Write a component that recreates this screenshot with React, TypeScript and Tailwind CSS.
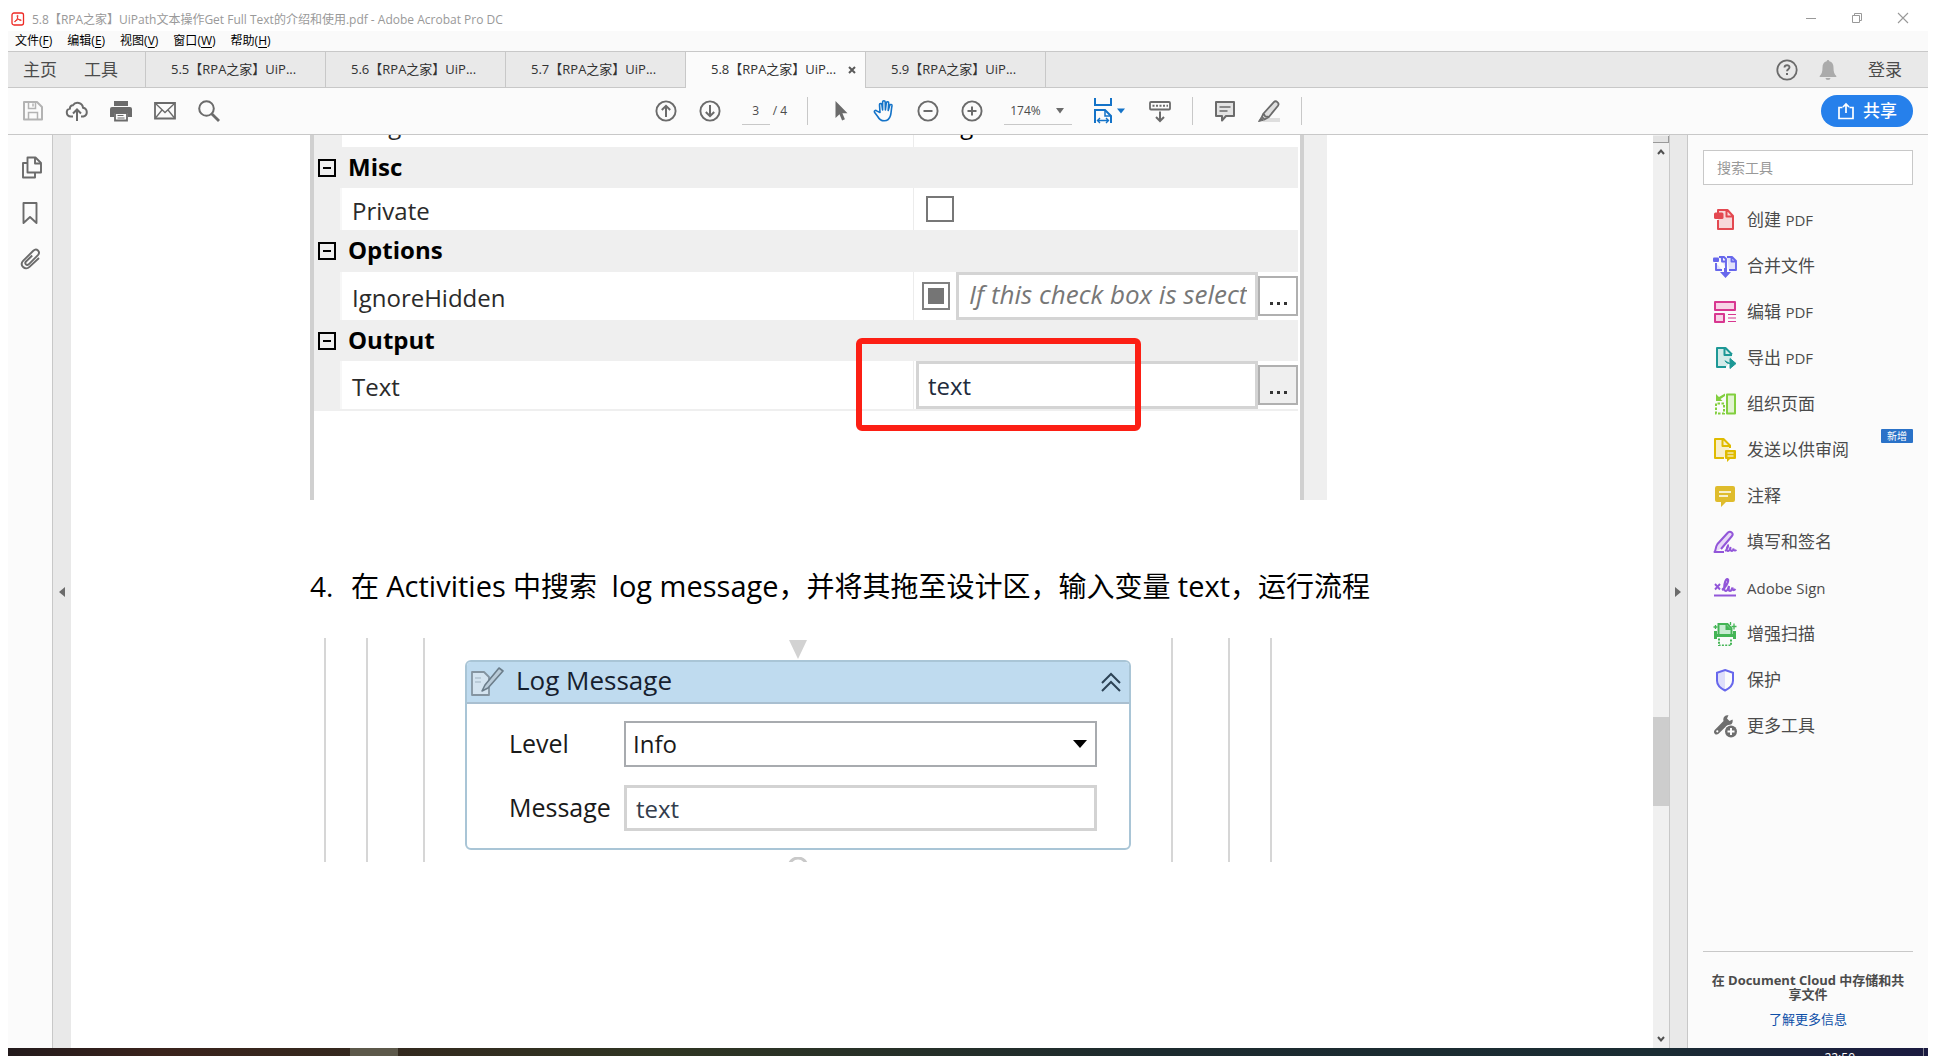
import type { ReactNode } from "react";

const UI = "font-['Open_Sans','Noto_Sans_CJK_SC',sans-serif]";

function Svg({ w = 24, h = 24, className = "", children }: { w?: number; h?: number; className?: string; children: ReactNode }) {
  return (
    <svg width={w} height={h} viewBox={`0 0 ${w} ${h}`} fill="none" aria-hidden="true" className={`shrink-0 ${className}`}>
      {children}
    </svg>
  );
}

function TitleBar() {
  return (
    <header className="flex h-[31px] items-center bg-white pl-[3px] text-xs text-[#999]">
      <Svg w={14} h={14} className="mt-[7px]">
        <rect x="1" y="1" width="11.5" height="12" rx="2" fill="#fff" stroke="#ee2a24" strokeWidth="1.3" />
        <path d="M6.6 3.2c-.8 0-.3 2.4.4 3.5.7 1.2 2.2 2 3 1.8.8-.3-.5-1.2-2.400-1C5.800 7.700 3.400 8.900 3.600 9.700c.3.8 1.700-.6 2.500-2.600.6-1.500 1-3.800.5-3.900Z" stroke="#ee2a24" strokeWidth="1" />
      </Svg>
      <h1 className="mt-2 ml-[7px] flex-1 font-normal whitespace-nowrap">5.8【RPA之家】UiPath文本操作Get Full Text的介绍和使用.pdf - Adobe Acrobat Pro DC</h1>
      <div className="mt-1 flex gap-[22px] pr-[13px]">
        <button aria-label="最小化">
          <Svg><path d="M7 12.500h10" stroke="#999" /></Svg>
        </button>
        <button aria-label="还原">
          <Svg><path d="M7.500 9.500h7v7h-7zM9.500 9.500v-2h7v7h-2" stroke="#999" /></Svg>
        </button>
        <button aria-label="关闭">
          <Svg><path d="M7 7l10 10M17 7L7 17" stroke="#999" strokeWidth="1.100" /></Svg>
        </button>
      </div>
    </header>
  );
}

const MENUS = [
  ["文件", "F"],
  ["编辑", "E"],
  ["视图", "V"],
  ["窗口", "W"],
  ["帮助", "H"],
];

function MenuBar() {
  return (
    <nav className="flex h-5 items-center gap-[15px] bg-[#fafafa] pl-[7px] text-xs text-black">
      {MENUS.map(([name, key]) => (
        <button key={key} className="whitespace-nowrap">
          {name}(<u className="underline-offset-2">{key}</u>)
        </button>
      ))}
    </nav>
  );
}

const TABS = ["5.5", "5.6", "5.7", "5.8", "5.9"];

function TabBar() {
  return (
    <div className="flex h-[37px] border-t border-[#c8c8c8] bg-[#e9e9e9] text-[#4b4b4b]">
      <div className="flex w-[138px] items-center gap-[27px] border-r border-b border-[#c8c8c8] pl-[15px] text-[17px]">
        <button>主页</button>
        <button>工具</button>
      </div>
      {TABS.map((n) => {
        const active = n === "5.8";
        return (
          <div
            key={n}
            className={`flex w-[180px] items-center border-r border-[#c8c8c8] pl-[25px] ${active ? "bg-[#fbfbfb]" : "border-b"}`}
          >
            <button className="text-[13px] whitespace-nowrap text-[#323232]">{n}【RPA之家】UiP...</button>
            {active && (
              <button aria-label="关闭标签" className="ml-auto pr-2">
                <Svg w={10} h={10}><path d="M2 2l6 6M8 2L2 8" stroke="#5a5a5a" strokeWidth="2" /></Svg>
              </button>
            )}
          </div>
        );
      })}
      <div className="flex flex-1 items-center justify-end border-b border-[#c8c8c8] pr-[26px]">
        <button aria-label="帮助">
          <Svg>
            <circle cx="12" cy="12" r="9.700" stroke="#6b6b6b" strokeWidth="1.800" />
            <path d="M9.500 9.500c.2-3 5-3 5-.2 0 1.900-2.500 1.900-2.500 4" stroke="#6b6b6b" strokeWidth="1.900" />
            <rect x="11" y="15" width="2" height="2" fill="#6b6b6b" />
          </Svg>
        </button>
        <button aria-label="通知" className="ml-[17px]">
          <Svg>
            <path d="M12 2a1.300 1.300 0 0 1 1.300 1.300c3 .7 4.200 3 4.200 6.200 0 4.500.8 6.500 2.800 8.500v1H3.700v-1c2-2 2.800-4 2.800-8.500 0-3.200 1.200-5.500 4.200-6.200A1.300 1.300 0 0 1 12 2ZM9.500 20h5a2.500 2 0 0 1-5 0Z" fill="#ababab" />
          </Svg>
        </button>
        <button className="ml-[28px] text-[17px]">登录</button>
      </div>
    </div>
  );
}

const G = "#6b6b6b";
const B = "#1473c8";

function IconButton({ label, children }: { label: string; children: ReactNode }) {
  return (
    <button aria-label={label} className="shrink-0">
      <Svg>{children}</Svg>
    </button>
  );
}

function Divider() {
  return <span className="h-7 w-px bg-[#c8c8c8]" />;
}

function Toolbar() {
  return (
    <div className="grid h-[47px] grid-cols-[1fr_auto_1fr] items-center border-b border-[#c8c8c8] bg-[#fbfbfb]">
      <div className="flex gap-5 pl-[13px]">
        <IconButton label="保存">
          <path d="M3 3h13l5 5v12.500H3z" stroke="#b3b3b3" strokeWidth="2" strokeLinejoin="round" />
          <path d="M7.500 3v6.500h7V3M12 4.500v3M7.500 20v-6.500h9V20" stroke="#b3b3b3" strokeWidth="1.500" />
        </IconButton>
        <IconButton label="上传到云">
          <path d="M8 17.500H5.800a4 4 0 0 1-.9-7.900 3 3 0 0 1 3-3.300A5.500 5.500 0 0 1 18 8.700a4.500 4.500 0 0 1 .4 8.800H16" stroke={G} strokeWidth="2" />
          <path d="M12 22V11M8 14.500l4-4 4 4" stroke={G} strokeWidth="2" />
        </IconButton>
        <IconButton label="打印">
          <path d="M5 2h14v5H5zM3 8h18a2 2 0 0 1 2 2v8h-4v-4H5v4H1v-8a2 2 0 0 1 2-2Z" fill={G} />
          <path d="M6 14h12v7.500H6z" stroke={G} strokeWidth="1.800" />
          <path d="M8.500 16.500h6M8.500 19h7" stroke={G} />
        </IconButton>
        <IconButton label="电子邮件">
          <path d="M2 4h20v15.500H2z" stroke={G} strokeWidth="1.800" />
          <path d="M2.500 4.500l9.500 9 9.500-9M2.500 19l6.500-8M21.500 19L15 11" stroke={G} strokeWidth="1.300" />
        </IconButton>
        <IconButton label="查找">
          <circle cx="9.500" cy="9.500" r="7.300" stroke={G} strokeWidth="2" />
          <path d="M14.700 14.700L22 22" stroke={G} strokeWidth="2.800" />
        </IconButton>
      </div>

      <div className="flex items-center gap-5 pl-5 text-xs text-[#4b4b4b]">
        <IconButton label="上一页">
          <circle cx="12" cy="12" r="9.600" stroke={G} strokeWidth="1.900" />
          <path d="M12 18V7M7.800 11L12 6.800l4.200 4.200" stroke={G} strokeWidth="2" />
        </IconButton>
        <IconButton label="下一页">
          <circle cx="12" cy="12" r="9.600" stroke={G} strokeWidth="1.900" />
          <path d="M12 6v11M7.800 13l4.200 4.200 4.200-4.200" stroke={G} strokeWidth="2" />
        </IconButton>
        <label className="flex items-center gap-[3px] whitespace-nowrap">
          <input aria-label="页码" defaultValue="3" className="h-7 w-7 border-b border-[#c8c8c8] bg-transparent text-center" />
          / 4
        </label>
        <Divider />
        <IconButton label="选择工具">
          <path d="M7.500 2v17l4-3.700 2.600 6.200 2.800-1.200-2.500-6h5.100z" fill={G} />
        </IconButton>
        <IconButton label="抓手工具">
          <path
            d="M8 13.500L7.500 5.800c-.1-1.600 2.200-1.700 2.400-.2l.7 5.400V3c0-1.700 2.500-1.700 2.600 0l.2 8 .9-7.200c.2-1.600 2.500-1.400 2.400.2l-.5 7.500 1.600-5.200c.5-1.400 2.500-.9 2.200.6-1 4.300-.6 6.600-1.500 9.600-1 3.500-3 5.300-6.300 5.300-3.500 0-5-1.500-6.500-4.300L2.500 13.200c-.7-1.500 1-2.400 2.100-1.300z"
            stroke={B}
            strokeWidth="1.600"
            strokeLinejoin="round"
          />
        </IconButton>
        <IconButton label="缩小">
          <circle cx="12" cy="12" r="9.600" stroke={G} strokeWidth="1.900" />
          <path d="M7.500 12h9" stroke={G} strokeWidth="2" />
        </IconButton>
        <IconButton label="放大">
          <circle cx="12" cy="12" r="9.600" stroke={G} strokeWidth="1.900" />
          <path d="M7.500 12h9M12 7.500v9" stroke={G} strokeWidth="2" />
        </IconButton>
        <div className="relative">
          <select aria-label="缩放比例" className="h-7 w-[68px] appearance-none border-b border-[#c8c8c8] bg-transparent pl-[6px]">
            <option>174%</option>
          </select>
          <Svg w={8} h={6} className="pointer-events-none absolute top-[11px] right-2"><path d="M0 0h8L4 5.500z" fill={G} /></Svg>
        </div>
        <button aria-label="适合页宽" className="shrink-0">
          <Svg w={36} h={26}>
            <path d="M3 0v7h16V0M3 25V12h10l6 6v7" stroke={B} strokeWidth="2" />
            <path d="M13 12v6h6" stroke={B} strokeWidth="1.500" />
            <path d="M5.500 22.500h11M8 20l-2.500 2.500L8 25M14 20l2.500 2.500L14 25" stroke={B} strokeWidth="1.400" />
            <path d="M25 10.500h8l-4 5z" fill={B} />
          </Svg>
        </button>
        <IconButton label="滚动模式">
          <rect x="2" y="3" width="20" height="7.500" rx="1" stroke={G} strokeWidth="1.800" />
          <path d="M4.500 6.800h15.500" stroke={G} strokeWidth="2" strokeDasharray="2 1.500" />
          <path d="M12 12.500v9M8 18l4 4 4-4" stroke={G} strokeWidth="2" />
        </IconButton>
        <Divider />
        <IconButton label="添加注释">
          <path d="M3 3h18v14H13l-4 4.500V17H3z" fill="#e3e3e3" stroke={G} strokeWidth="2" strokeLinejoin="round" />
          <path d="M6.500 8h11M6.500 12h8" stroke={G} strokeWidth="1.300" />
        </IconButton>
        <IconButton label="高亮文本">
          <path d="M9 19h14v4H5z" fill="#dedede" />
          <path d="M6.500 14.500L16.800 3.200c2.200-2.300 6 .8 4.200 3.500L11.800 18l-3.500-.5zM6.500 14.500L4.800 18l2.700 2.500 4-2.200" fill="#dedede" stroke={G} strokeWidth="1.800" />
          <path d="M4 18.500L1.500 22.500l5-1.200z" fill={G} stroke={G} />
        </IconButton>
        <Divider />
      </div>

      <div className="flex justify-end pr-[15px]">
        <button className="flex h-8 w-[92px] items-center justify-center gap-2 rounded-full bg-[#2680eb] text-[17px] font-medium text-white">
          <Svg w={18} h={18}>
            <path d="M5.500 5.500H2v11h14v-11h-3.500M9 11V2.500M6 5l3-3 3 3" stroke="#fff" strokeWidth="1.700" />
          </Svg>
          共享
        </button>
      </div>
    </div>
  );
}

function LeftRail() {
  return (
    <>
      <aside className="flex w-11 shrink-0 flex-col items-center gap-[22px] bg-[#fbfbfb] pt-5 pl-0.5">
        <IconButton label="页面缩略图">
          <path d="M8.500 2.500h8L22 8v9.500H8.500z" stroke={G} strokeWidth="1.900" strokeLinejoin="round" />
          <path d="M16 3v5.500h6M8 8H4v14.500h12V18" stroke={G} strokeWidth="1.900" strokeLinejoin="round" />
        </IconButton>
        <IconButton label="书签">
          <path d="M4.500 2h13v20L11 16l-6.500 6z" stroke={G} strokeWidth="1.900" strokeLinejoin="round" />
        </IconButton>
        <IconButton label="附件">
          <path
            d="M13.200 8.500L7 14.500c-1.900 2 .7 4.700 2.700 2.800l9.200-9.200c3-3.300-1.300-7.400-4.600-4.300l-10 9.800c-4.300 4.500 1.800 10.500 6.200 6.300L20 11"
            stroke={G}
            strokeWidth="1.900"
          />
        </IconButton>
      </aside>
      <button aria-label="折叠导航窗格" className="flex w-[19px] shrink-0 items-center justify-center border-l border-[#c8c8c8] bg-[#e9e9e9]">
        <Svg w={6} h={10}><path d="M6 0v10L0 5z" fill={G} /></Svg>
      </button>
    </>
  );
}

function GroupRow({ name, tall = false }: { name: string; tall?: boolean }) {
  return (
    <div className={`flex bg-[#efefef] ${tall ? "h-[42px]" : "h-[41px]"}`}>
      <div className="flex w-[26px] shrink-0 items-center justify-center">
        <button aria-label={`折叠 ${name}`} className="flex size-[18px] items-center justify-center border-2 border-black">
          <span className="h-0.5 w-2 bg-black" />
        </button>
      </div>
      <h2 className="pl-2 text-2xl/10 font-bold text-black">{name}</h2>
    </div>
  );
}

function PropertyRow({ label, htmlFor, height, children }: { label: string; htmlFor: string; height: string; children: ReactNode }) {
  return (
    <div className={`flex ${height}`}>
      <div className="w-7 shrink-0 border-r-2 border-[#f7f7f7] bg-[#efefef]" />
      <label htmlFor={htmlFor} className="flex w-[572px] shrink-0 items-center border-r border-[#ececec] pt-1 pl-[10px] text-2xl text-[#2a2a2a]">
        {label}
      </label>
      <div className="flex min-w-0 flex-1 items-center">{children}</div>
    </div>
  );
}

function MoreButton({ label, filled = false }: { label: string; filled?: boolean }) {
  return (
    <button
      aria-label={label}
      className={`flex h-10 w-10 shrink-0 items-end justify-center border-2 border-[#b0b0b0] pb-2 ${filled ? "bg-[#efefef]" : "bg-white"}`}
    >
      <Svg w={18} h={4}>
        <path d="M1 0h3v3H1zM8 0h3v3H8zM15 0h3v3h-3z" fill="#333" />
      </Svg>
    </button>
  );
}

function PropertiesPanel() {
  return (
    <section aria-label="属性面板" className="relative flex h-[365px] w-[1017px]">
      <div className="w-1 bg-[#d0d0d0]" />
      <div className="w-[986px] pr-0.5">
        <div className="flex h-3 overflow-hidden text-2xl/[33px] text-[#2a2a2a]">
          <div className="w-7 shrink-0 bg-[#efefef]" />
          <div className="flex w-[572px] shrink-0 items-end border-r border-[#ececec] pb-[6px] pl-[10px]">Target</div>
          <div className="flex items-end pb-[6px] pl-[10px] text-black">Target</div>
        </div>
        <GroupRow name="Misc" />
        <PropertyRow label="Private" htmlFor="private" height="h-[42px]">
          <input id="private" type="checkbox" className="ml-3 h-[26px] w-7 appearance-none border-2 border-[#777] bg-white" />
        </PropertyRow>
        <GroupRow name="Options" tall />
        <PropertyRow label="IgnoreHidden" htmlFor="ignore-hidden" height="h-12">
          <span className="ml-2 flex size-7 shrink-0 items-center justify-center border-2 border-[#808080]">
            <input id="ignore-hidden" type="checkbox" defaultChecked className="size-4 appearance-none bg-[#757575]" />
          </span>
          <div className="ml-[6px] h-12 min-w-0 flex-1 border-[3px] border-[#d4d4d4] bg-white pr-2 pb-1 pl-[10px]">
            <input
              aria-label="IgnoreHidden 表达式"
              placeholder="If this check box is selected"
              className="h-full w-full text-[26px] text-[#777] italic placeholder:text-[#777]"
            />
          </div>
          <MoreButton label="编辑 IgnoreHidden" />
        </PropertyRow>
        <GroupRow name="Output" />
        <PropertyRow label="Text" htmlFor="output-text" height="h-[50px] border-b-2 border-[#efefef]">
          <input
            id="output-text"
            defaultValue="text"
            className="ml-0.5 h-12 min-w-0 flex-1 border-[3px] border-[#d4d4d4] bg-white pl-[9px] text-2xl text-[#222b3c]"
          />
          <MoreButton label="编辑 Text" filled />
        </PropertyRow>
      </div>
      <div className="w-1 bg-[#d0d0d0]" />
      <div className="flex-1 bg-[#efefef]" />
      <div className="pointer-events-none absolute top-[203px] left-[546px] h-[93px] w-[285px] rounded-md border-[6px] border-[#fc1f14]" />
    </section>
  );
}

function GuideLines({ className }: { className: string }) {
  return (
    <div className={`flex justify-between ${className}`}>
      <span className="w-0.5 bg-[#d6d6d6]" />
      <span className="ml-auto w-0.5 bg-[#d6d6d6]" />
    </div>
  );
}

function LogMessageFlow() {
  return (
    <section aria-label="Log Message 活动" className="ml-[14px] flex h-56 w-[948px]">
      <GuideLines className="w-11 shrink-0" />
      <span className="ml-[55px] w-0.5 shrink-0 bg-[#d6d6d6]" />
      <div className="mx-10 flex w-[666px] shrink-0 flex-col items-center overflow-hidden">
        <Svg w={18} h={22}><path d="M0 2h18L9 21z" fill="#d2d2d2" /></Svg>
        <div className="h-[190px] w-full shrink-0 rounded-md border-2 border-[#a9c5d6] bg-white">
          <div className="flex h-[42px] items-center rounded-t border-b-2 border-[#a9bfd0] bg-[#bfdbef] pl-[3px]">
            <Svg w={34} h={30}>
              <path d="M2 5h12l5 5v18H2z" fill="#d4e4f0" stroke="#8494a0" strokeWidth="1.800" strokeLinejoin="round" />
              <path d="M29 1l4 3-15 17-6 3 3-6z" fill="#b9cbd8" stroke="#6b7d8a" strokeWidth="1.600" strokeLinejoin="round" />
              <path d="M5 11h6M5 15h6" stroke="#9fb2c0" />
            </Svg>
            <h2 className="ml-[12px] flex-1 pb-1 text-[26px] text-[#16202e]">Log Message</h2>
            <button aria-label="折叠活动" className="mr-[6px]">
              <Svg w={24} h={24}><path d="M3 13l9-9 9 9M3 21l9-9 9 9" stroke="#2d4356" strokeWidth="2" /></Svg>
            </button>
          </div>
          <div className="grid grid-cols-[115px_1fr] items-center gap-y-[18px] pt-[17px] pr-8 pl-[42px] text-2xl text-[#1a1a1a]">
            <label htmlFor="level" className="text-[25px]">Level</label>
            <div className="relative">
              <select id="level" className="h-[46px] w-full appearance-none border-2 border-[#a8abaf] bg-white pl-[7px]">
                <option>Info</option>
              </select>
              <Svg w={14} h={8} className="pointer-events-none absolute top-[19px] right-[10px]"><path d="M0 0h14L7 8z" fill="#000" /></Svg>
            </div>
            <label htmlFor="message" className="text-[25px]">Message</label>
            <input id="message" defaultValue="text" className="h-[46px] w-full border-[3px] border-[#d3d3d3] bg-white pl-[9px] text-[#333d4d]" />
          </div>
        </div>
        <Svg w={22} h={14} className="mt-[7px]"><circle cx="11" cy="10" r="9" stroke="#c9c9c9" strokeWidth="3" /></Svg>
      </div>
      <span className="w-0.5 shrink-0 bg-[#d6d6d6]" />
      <GuideLines className="ml-[55px] w-11 shrink-0" />
    </section>
  );
}

function Latin({ children }: { children: ReactNode }) {
  return <span className="text-[29px]">{children}</span>;
}

function Document() {
  return (
    <main className="min-w-0 flex-1 overflow-hidden bg-white pl-[239px]">
      <PropertiesPanel />
      <p className="mt-[66px] flex h-10 items-center text-[28px] whitespace-pre text-black">
        <span className="w-[41px]">4.</span>
        <span>
          在 <Latin>Activities</Latin> 中搜索{"  "}<Latin>log message</Latin>，并将其拖至设计区，输入变量 <Latin>text</Latin>，运行流程
        </span>
      </p>
      <div className="mt-8">
        <LogMessageFlow />
      </div>
    </main>
  );
}

function ScrollBar() {
  return (
    <div className="flex w-4 shrink-0 flex-col items-center bg-[#f0f0f0]">
      <div className="mt-px h-[7px] w-full border-r border-b border-[#999] bg-[#e3e3e3]" />
      <Svg w={8} h={8} className="mt-[5px]"><path d="M1 6l3-3.500L7 6" stroke="#505050" strokeWidth="2" /></Svg>
      <div className="flex-[561]" />
      <div className="h-[89px] w-full bg-[#cdcdcd]" />
      <div className="flex-[229]" />
      <Svg w={8} h={8} className="mb-[5px]"><path d="M1 2l3 3.500L7 2" stroke="#505050" strokeWidth="2" /></Svg>
    </div>
  );
}

const TOOLS: { name?: string; latin?: string; badge?: string; icon: ReactNode }[] = [
  {
    name: "创建",
    latin: "PDF",
    icon: (
      <>
        <path d="M5 12v9h15V8l-5.500-6H5v3" fill="#f7d7d9" />
        <path d="M5 12v9h15V8l-5.500-6H5v3M13.500 2v6.500H20" stroke="#e34850" strokeWidth="2" strokeLinejoin="round" />
        <rect x="1" y="4.500" width="9.500" height="6.500" rx="1.500" fill="#e34850" />
      </>
    ),
  },
  {
    name: "合并文件",
    icon: (
      <>
        <path d="M3 9v7h6M6 3h5l2 2v9M14 3h5l4 4v9h-7M18.500 3v4.500H23M9 3v4.500h4" fill="#e1e1fa" stroke="#6767ec" strokeWidth="1.900" strokeLinejoin="round" />
        <rect x="0" y="3.500" width="6" height="4.500" rx="1" fill="#6767ec" />
        <path d="M11 14h3v4h4l-5.500 6L7 18h4z" fill="#6767ec" />
      </>
    ),
  },
  {
    name: "编辑",
    latin: "PDF",
    icon: (
      <>
        <path d="M2 2h20v8H2zM2 14h9v8H2z" fill="#f8d3e6" stroke="#d83790" strokeWidth="2" strokeLinejoin="round" />
        <path d="M15 14.500h8M15 18h8M15 21.500h8" stroke="#d83790" strokeWidth="1.200" />
      </>
    ),
  },
  {
    name: "导出",
    latin: "PDF",
    icon: (
      <>
        <path d="M13 21H4V2h8.500l6 6v6" fill="#d3ebe9" />
        <path d="M13 21H4V2h8.500l6.500 6.500M11.500 2v7H19" stroke="#1d9896" strokeWidth="2" strokeLinejoin="round" />
        <path d="M12 14.500c1 2.500 2.500 3 6 3M17 12.500l6 5-6 5z" fill="#1d9896" stroke="#1d9896" strokeWidth="1" />
      </>
    ),
  },
  {
    name: "组织页面",
    icon: (
      <>
        <path d="M14 2.500h8v19h-8z" fill="#e2f3d2" stroke="#82cf3f" strokeWidth="2" strokeLinejoin="round" />
        <path d="M11 11.500H3v10h8z" stroke="#82cf3f" strokeWidth="2" strokeDasharray="2.500 1.500" />
        <path d="M3 2v7h6.500L7.500 7 12 4V1.500L6 5z" fill="#82cf3f" />
      </>
    ),
  },
  {
    name: "发送以供审阅",
    badge: "新增",
    icon: (
      <>
        <path d="M11 20H2V1h8.500l6 6.500V11" fill="#f8efcb" />
        <path d="M11 20H2V1h8.500l6.500 6.500V10M9.500 1v7H17" stroke="#dfbb00" strokeWidth="2" strokeLinejoin="round" />
        <path d="M13 12h9a1 1 0 0 1 1 1v7a1 1 0 0 1-1 1h-5l-3 3v-3h-1a1 1 0 0 1-1-1v-7a1 1 0 0 1 1-1Z" fill="#dfbb00" />
        <path d="M14.500 15h6M14.500 18h6" stroke="#fff" strokeWidth="1.200" />
      </>
    ),
  },
  {
    name: "注释",
    icon: (
      <>
        <path d="M4 2h16a2 2 0 0 1 2 2v12a2 2 0 0 1-2 2h-7l-5 5v-5H4a2 2 0 0 1-2-2V4a2 2 0 0 1 2-2Z" fill="#dfbc2c" />
        <path d="M6 8h12M6 12h9" stroke="#fff" strokeWidth="1.500" />
      </>
    ),
  },
  {
    name: "填写和签名",
    icon: (
      <>
        <path d="M2 22l1.500-8L14.500 2.500c2.500-2.500 6.500.5 4.500 3.500L10 17.500" fill="#e8d9f7" />
        <path d="M11 22H1.500c1.500-1.500.8-5 3-8L15 2.500c2.500-2 6 .8 4 3.500L8 19" stroke="#9256d9" strokeWidth="2" strokeLinejoin="round" />
        <path d="M12 21c2-1 3.500-4.500 3-5.500-1.500 2-2 5.500 0 5.500s2-2.500 2.500-4c-.2 2-.2 4 1.300 4 1.200 0 1.500-1.500 1.700-2.500 0 2 1.500 2.500 3 1.500" stroke="#9256d9" strokeWidth="1.900" />
      </>
    ),
  },
  {
    latin: "Adobe Sign",
    icon: (
      <>
        <path d="M2 8l5 5.500M7 8l-5 5.500M1 19.500h22" stroke="#9256d9" strokeWidth="1.900" />
        <path d="M9 14c3-2 7-8 6-10.500-1-1.500-3 1-3.500 5s-.5 6.500 1 6.500c2 0 3-3 3.500-5-.5 3-.5 5 1 5s2-2 2.500-3.500c0 2.500 1 3.500 3 1.500" stroke="#9256d9" strokeWidth="2.200" />
      </>
    ),
  },
  {
    name: "增强扫描",
    icon: (
      <>
        <path d="M5.500 12V2h9l4 4.500V12" fill="#c8ecd2" stroke="#44b556" strokeWidth="2" />
        <path d="M12.500 2v6h6M1 9h3v3h16V9h3v8h-3v-2H4v2H1z" fill="#44b556" />
        <path d="M6 16.500v7h12v-7" stroke="#44b556" strokeWidth="2" strokeDasharray="2 1.300" />
        <path d="M2.500 3v4M.5 5h4M21 1.500v6M18.500 4.500h5M17.500 0v3" stroke="#44b556" strokeWidth="1.300" />
      </>
    ),
  },
  {
    name: "保护",
    icon: (
      <>
        <path d="M12 2L4 4.500v8c0 4.500 3.500 7.500 8 9.500z" fill="#dedefa" />
        <path d="M12 2l8 2.700v8c0 4.500-3.500 7.500-8 9.800-4.500-2.300-8-5.300-8-9.800v-8z" stroke="#6767ec" strokeWidth="2" />
      </>
    ),
  },
  {
    name: "更多工具",
    icon: (
      <>
        <path d="M19.500 5.500l-3 1.500-2.500-2.500 1.500-3.200c-3.500-.6-6 2-5 5.700L1.700 16c-2.200 2.800 1.200 6 3.800 3.800L14 11.500c4 .8 6.500-2.500 5.500-6Z" fill="#6e6e6e" />
        <circle cx="4.300" cy="17.300" r="1.100" fill="#fff" />
        <circle cx="18" cy="17.500" r="7" fill="#fbfbfb" />
        <circle cx="18" cy="17.500" r="6" fill="#6e6e6e" />
        <path d="M18 14v7M14.500 17.500h7" stroke="#fff" strokeWidth="1.900" />
      </>
    ),
  },
];

function ToolsPanel() {
  return (
    <>
      <button aria-label="折叠工具窗格" className="flex w-[19px] shrink-0 items-center border-x border-[#c8c8c8] bg-[#e9e9e9] pl-[5px]">
        <Svg w={6} h={10}><path d="M0 0v10l6-5z" fill={G} /></Svg>
      </button>
      <aside className="flex w-60 shrink-0 flex-col bg-[#fbfbfb] px-[15px] pt-[15px] pb-5">
        <input
          aria-label="搜索工具"
          placeholder="搜索工具"
          className="h-[35px] shrink-0 border border-[#c8c8c8] bg-white px-[13px] text-sm text-[#4b4b4b] placeholder:text-[#999]"
        />
        <ul className="mt-3 flex-1">
          {TOOLS.map((t) => (
            <li key={`${t.name} ${t.latin}`}>
              <button className="flex h-[46px] w-full items-center gap-[10px] pl-[10px] text-left text-[17px] whitespace-nowrap text-[#4b4b4b]">
                <Svg>{t.icon}</Svg>
                <span className="flex-1">
                  {t.name && t.latin ? `${t.name} ` : t.name}
                  {t.latin && <span className="text-[15px]">{t.latin}</span>}
                </span>
                {t.badge && (
                  <span className="mb-7 flex h-[14px] w-8 items-center justify-center rounded-[1px] bg-[#2a72c8] text-[10px]/[14px] text-white">{t.badge}</span>
                )}
              </button>
            </li>
          ))}
        </ul>
        <div className="border-t border-[#c8c8c8] pt-[21px] text-center">
          <p className="px-1 text-[13px]/[14px] font-bold text-[#4b4b4b]">在 Document Cloud 中存储和共享文件</p>
          <a href="#learn-more" className="mt-[9px] block text-[13px]/[18px] text-[#0d4fa8]">了解更多信息</a>
        </div>
      </aside>
    </>
  );
}

function Taskbar() {
  return (
    <footer className="flex h-2 shrink-0 items-start overflow-hidden bg-[linear-gradient(to_right,#231a1c,#3a231c_8%,#33291e_20%,#2f3522_34%,#1c2a2e_60%,#1a2c33_86%,#1a1a40)]">
      <span className="ml-[342px] h-2 w-12 bg-[#5c584a]" />
      <time className="mt-0.5 ml-auto text-xs/4 text-white">22:50</time>
      <span className="mr-1 ml-[68px] h-2 w-px bg-[#80808c]" />
    </footer>
  );
}

export default function App() {
  return (
    <div className={`flex h-screen flex-col overflow-hidden bg-white px-2 ${UI}`}>
      <TitleBar />
      <MenuBar />
      <TabBar />
      <Toolbar />
      <div className="flex min-h-0 flex-1">
        <LeftRail />
        <Document />
        <ScrollBar />
        <ToolsPanel />
      </div>
      <Taskbar />
    </div>
  );
}
